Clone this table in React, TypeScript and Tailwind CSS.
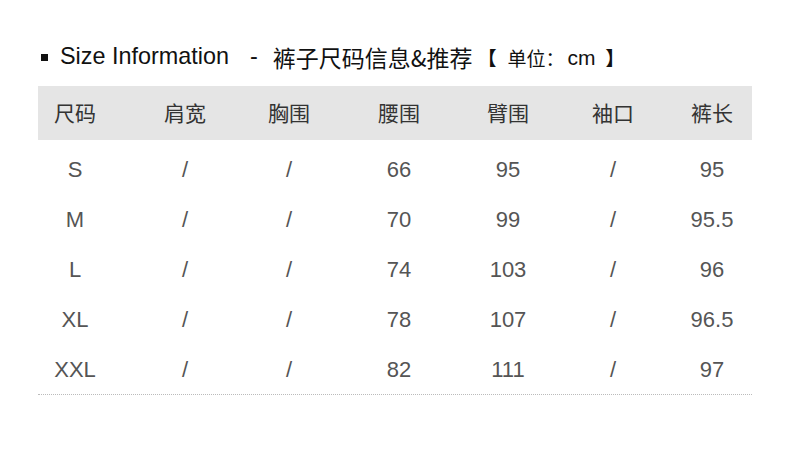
const headers = ["尺码", "肩宽", "胸围", "腰围", "臂围", "袖口", "裤长"];

const rows = [
  ["S", "/", "/", "66", "95", "/", "95"],
  ["M", "/", "/", "70", "99", "/", "95.5"],
  ["L", "/", "/", "74", "103", "/", "96"],
  ["XL", "/", "/", "78", "107", "/", "96.5"],
  ["XXL", "/", "/", "82", "111", "/", "97"],
];

// column widths chosen so each centre lines up with the picture
const cols = "grid grid-cols-[74px_146px_62px_158px_60px_150px_48px_18px]";

const App = () => {
  return (
    <div className="w-[790px] h-[456px] bg-white px-[38px] pt-[45px] font-['Liberation_Sans','Noto_Sans_CJK_SC',sans-serif]">
      <div className="flex items-center h-[24px] text-[#111] text-[23.4px] leading-none whitespace-nowrap">
        <span className="ml-[3px] w-[7px] h-[7px] bg-[#111] mr-[12px]"></span>
        <span>Size Information</span>
        <span className="ml-[21px] mr-[15px]">-</span>
        <span className="text-[23px] font-['Noto_Sans_CJK_SC',sans-serif]">裤子尺码信息&amp;推荐</span>
        <span className="ml-[5px] flex items-center text-[19px] font-['Noto_Sans_CJK_SC',sans-serif]">
          <span className="font-bold">【</span>
          <span className="ml-[11px]">单位：</span>
          <span className="ml-[3px] text-[21px] font-['Liberation_Sans',sans-serif]">cm</span>
          <span className="ml-[10px] font-bold">】</span>
        </span>
      </div>

      <div className={`${cols} mt-[17px] h-[54px] items-center bg-[#e5e5e5] text-[#333] text-[21px] font-['Noto_Sans_CJK_SC',sans-serif]`}>
        {headers.map((h) => (
          <div key={h} className="text-center whitespace-nowrap">
            {h}
          </div>
        ))}
        <div></div>
      </div>

      <div className="mt-[4px] border-b border-dotted border-[#bbb]">
        {rows.map((r) => (
          <div key={r[0]} className={`${cols} h-[50px] items-center text-[#555] text-[22px]`}>
            {r.map((c, i) => (
              <div key={i} className="text-center whitespace-nowrap">
                {c}
              </div>
            ))}
            <div></div>
          </div>
        ))}
      </div>
    </div>
  );
};

export default App;
